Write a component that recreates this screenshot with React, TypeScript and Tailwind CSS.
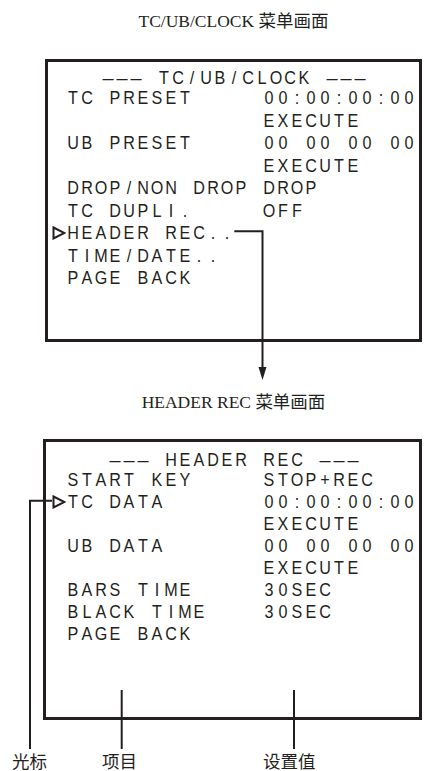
import React from "react";

type Row = { label: string; value: string; cursor?: boolean };

const CLOCK_ROWS: Row[] = [
  { label: "TC PRESET", value: "00:00:00:00" },
  { label: "", value: "EXECUTE" },
  { label: "UB PRESET", value: "00 00 00 00" },
  { label: "", value: "EXECUTE" },
  { label: "DROP/NON DROP", value: "DROP" },
  { label: "TC DUPLI.", value: "OFF" },
  { label: "HEADER REC..", value: "", cursor: true },
  { label: "TIME/DATE..", value: "" },
  { label: "PAGE BACK", value: "" },
];

const HEADER_ROWS: Row[] = [
  { label: "START KEY", value: "STOP+REC" },
  { label: "TC DATA", value: "00:00:00:00", cursor: true },
  { label: "", value: "EXECUTE" },
  { label: "UB DATA", value: "00 00 00 00" },
  { label: "", value: "EXECUTE" },
  { label: "BARS TIME", value: "30SEC" },
  { label: "BLACK TIME", value: "30SEC" },
  { label: "PAGE BACK", value: "" },
];

// one character per fixed cell, like the camera's on-screen display
function Cells({ text }: { text: string }) {
  return (
    <>
      {[...text].map((c, i) => (
        <span
          key={i}
          className={`flex w-[14px] shrink-0 justify-center ${c === "–" ? "scale-x-[1.05]" : "scale-x-[0.85]"}`}
        >
          {c === " " ? "\u00a0" : c}
        </span>
      ))}
    </>
  );
}

function Cursor() {
  return (
    <span className="flex w-[14px] shrink-0 items-center justify-center">
      <svg width="14" height="14" viewBox="0 0 14 14">
        <polygon points="1.5,1.5 12.5,7 1.5,12.5" fill="none" stroke="#231f20" strokeWidth="2" />
      </svg>
    </span>
  );
}

function MenuRows({ rows, lh }: { rows: Row[]; lh: string }) {
  return (
    <div>
      {rows.map((r, i) => (
        <div key={i} className={`flex ${lh}`}>
          {r.cursor ? <Cursor /> : <span className="w-[14px] shrink-0" />}
          <Cells text={r.label.padEnd(14, " ") + r.value} />
        </div>
      ))}
    </div>
  );
}

export default function App() {
  const ink = "#231f20";
  return (
    <div className="relative w-[424px] h-[771px] overflow-hidden bg-white text-[#231f20]">
      <div className="pt-[11px]">
        <div className="ml-[45px] w-[377px] h-[20px] text-center font-['Liberation_Serif','Noto_Sans_CJK_SC',serif] text-[17.5px] leading-[20px]">
          TC/UB/CLOCK 菜单画面
        </div>

        <div className="mt-[28px] ml-[45px] w-[377px] h-[283px] border-[3px] border-[#231f20] pt-[7px] pl-[4px] pr-[3px] font-['Liberation_Sans',Arial,sans-serif] text-[19px]">
          <div className="flex justify-center h-[18px] leading-[18px]">
            <Cells text="––– TC/UB/CLOCK –––" />
          </div>
          <MenuRows rows={CLOCK_ROWS} lh="h-[22.5px] leading-[22.5px]" />
        </div>

        <div className="mt-[50px] ml-[45px] w-[377px] h-[20px] text-center font-['Liberation_Serif','Noto_Sans_CJK_SC',serif] text-[17.5px] leading-[20px]">
          HEADER REC 菜单画面
        </div>

        <div className="mt-[27px] ml-[43px] w-[379px] h-[281px] border-[3px] border-[#231f20] pt-[9px] pl-[6px] pr-[3px] font-['Liberation_Sans',Arial,sans-serif] text-[19px]">
          <div className="flex justify-center h-[18px] leading-[18px]">
            <Cells text="––– HEADER REC –––" />
          </div>
          <MenuRows rows={HEADER_ROWS} lh="h-[22px] leading-[22px]" />
        </div>

        <div className="mt-[32px] flex h-[20px] font-['Liberation_Serif','Noto_Sans_CJK_SC',serif] text-[17.5px] leading-[20px]">
          <span className="ml-[12px]">光标</span>
          <span className="ml-[55px]">项目</span>
          <span className="ml-[126px]">设置值</span>
        </div>
      </div>

      {/* callout lines and arrow */}
      <svg className="pointer-events-none absolute left-0 top-0" width="424" height="771" viewBox="0 0 424 771">
        <path d="M234.3 231.3 H262.5 V368" fill="none" stroke={ink} strokeWidth="2" />
        <polygon points="258.5,367 266.5,367 262.5,380" fill={ink} />
        <path d="M52 500.7 H30 V749" fill="none" stroke={ink} strokeWidth="2" />
        <line x1="121.7" y1="690" x2="121.7" y2="749" stroke={ink} strokeWidth="2" />
        <line x1="294" y1="690" x2="294" y2="749" stroke={ink} strokeWidth="2" />
      </svg>
    </div>
  );
}
